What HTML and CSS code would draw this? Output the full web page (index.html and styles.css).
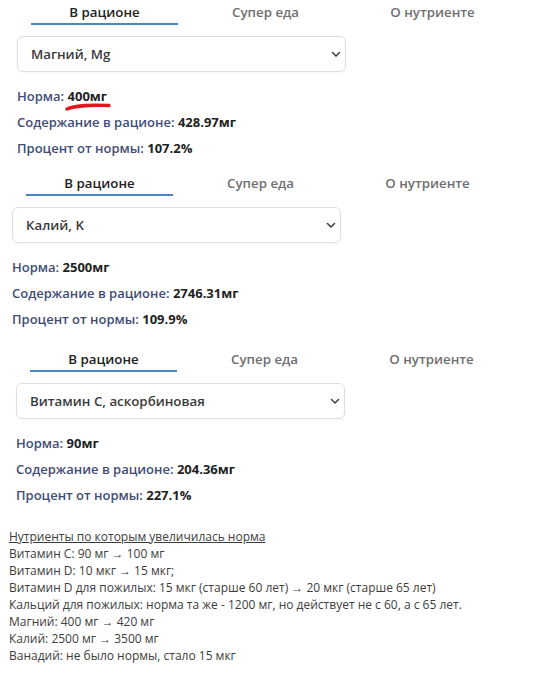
FILE: index.html
```html
<!DOCTYPE html>
<html lang="ru">
<head>
<meta charset="utf-8">
<link rel="stylesheet" href="styles.css">
</head>
<body>
<div class="panel panel-1">
  <div class="tabs">
    <div class="tab active">В рационе</div>
    <div class="tab t2">Супер еда</div>
    <div class="tab t3">О нутриенте</div>
  </div>
  <div class="select"><span>Магний, Mg</span><svg class="chev" width="10" height="7" viewBox="0 0 10 7"><path d="M1.5 1.5 L5 5 L8.5 1.5" fill="none" stroke="#444" stroke-width="1.6" stroke-linecap="round" stroke-linejoin="round"/></svg></div>
  <div class="stats">
    <div class="row mark-row"><span class="lbl">Норма:</span> <b>400мг</b>
      <svg class="scribble" width="50" height="10" viewBox="0 0 50 10"><path d="M2 8 C 12 4, 26 4, 44 4.5" fill="none" stroke="#e3141c" stroke-width="3.4" stroke-linecap="round"/></svg>
    </div>
    <div class="row"><span class="lbl">Содержание в рационе:</span> <b>428.97мг</b></div>
    <div class="row"><span class="lbl">Процент от нормы:</span> <b>107.2%</b></div>
  </div>
</div>

<div class="panel panel-2">
  <div class="tabs">
    <div class="tab active">В рационе</div>
    <div class="tab t2">Супер еда</div>
    <div class="tab t3">О нутриенте</div>
  </div>
  <div class="select"><span>Калий, K</span><svg class="chev" width="10" height="7" viewBox="0 0 10 7"><path d="M1.5 1.5 L5 5 L8.5 1.5" fill="none" stroke="#444" stroke-width="1.6" stroke-linecap="round" stroke-linejoin="round"/></svg></div>
  <div class="stats">
    <div class="row"><span class="lbl">Норма:</span> <b>2500мг</b></div>
    <div class="row"><span class="lbl">Содержание в рационе:</span> <b>2746.31мг</b></div>
    <div class="row"><span class="lbl">Процент от нормы:</span> <b>109.9%</b></div>
  </div>
</div>

<div class="panel panel-3">
  <div class="tabs">
    <div class="tab active">В рационе</div>
    <div class="tab t2">Супер еда</div>
    <div class="tab t3">О нутриенте</div>
  </div>
  <div class="select"><span>Витамин С, аскорбиновая</span><svg class="chev" width="10" height="7" viewBox="0 0 10 7"><path d="M1.5 1.5 L5 5 L8.5 1.5" fill="none" stroke="#444" stroke-width="1.6" stroke-linecap="round" stroke-linejoin="round"/></svg></div>
  <div class="stats">
    <div class="row"><span class="lbl">Норма:</span> <b>90мг</b></div>
    <div class="row"><span class="lbl">Содержание в рационе:</span> <b>204.36мг</b></div>
    <div class="row"><span class="lbl">Процент от нормы:</span> <b>227.1%</b></div>
  </div>
</div>

<div class="notes">
  <div class="notes-title">Нутриенты по которым увеличилась норма</div>
  <div>Витамин С: 90 мг → 100 мг</div>
  <div>Витамин D: 10 мкг → 15 мкг;</div>
  <div>Витамин D для пожилых: 15 мкг (старше 60 лет) → 20 мкг (старше 65 лет)</div>
  <div>Кальций для пожилых: норма та же - 1200 мг, но действует не с 60, а с 65 лет.</div>
  <div>Магний: 400 мг → 420 мг</div>
  <div>Калий: 2500 мг → 3500 мг</div>
  <div>Ванадий: не было нормы, стало 15 мкг</div>
</div>
</body>
</html>
```

FILE: styles.css
```css
html, body {
  margin: 0;
  padding: 0;
  background: #fff;
}
body {
  font-family: "Open Sans", "Liberation Sans", sans-serif;
  color: #222;
}
.panel {
  width: 329px;
}
.panel-1 { margin-left: 17px; margin-top: 0; }
.panel-2 { margin-left: 12px; margin-top: 10px; }
.panel-3 { margin-left: 16px; margin-top: 15px; }

.tabs {
  display: flex;
  padding-left: 14px;
  white-space: nowrap;
}
.tab {
  width: 147px;
  flex: none;
  text-align: center;
  font-size: 13.3px;
  font-weight: 600;
  line-height: 20px;
  padding-top: 2px;
  padding-bottom: 1px;
  border-bottom: 2px solid transparent;
  color: #6f6f6f;
}
.tab.active {
  color: #222;
  border-bottom-color: #4a86c6;
}
.tab.t2 { margin-left: 14px; }
.tab.t3 { margin-left: 20px; }

.select {
  margin-top: 11px;
  height: 36px;
  box-sizing: border-box;
  border: 1px solid #dedede;
  border-radius: 6px;
  display: flex;
  align-items: center;
  justify-content: space-between;
  padding: 0 4px 0 13px;
  font-size: 13.3px;
  font-weight: 600;
  color: #3a3a3a;
  box-shadow: 0 1px 2px rgba(0,0,0,0.04);
}
.chev { display: block; }

.stats {
  margin-top: 11px;
}
.row {
  line-height: 26px;
  font-size: 13px;
  font-weight: 600;
  white-space: nowrap;
}
.row b {
  font-weight: 700;
  color: #222;
}
.lbl {
  color: #3f4d75;
}
.mark-row {
  position: relative;
}
.scribble {
  position: absolute;
  left: 48px;
  top: 18px;
}

.notes {
  margin: 20px 0 0 9px;
  font-size: 12px;
  line-height: 17px;
  color: #3d3d3d;
  white-space: nowrap;
}
.notes-title {
  text-decoration: underline;
}
```
